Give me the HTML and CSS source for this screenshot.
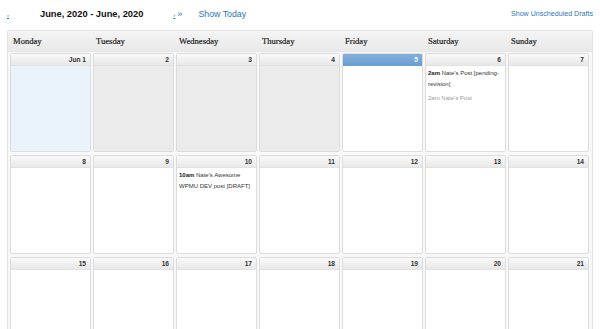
FILE: index.html
```html
<!DOCTYPE html>
<html>
<head>
<meta charset="utf-8">
<link rel="stylesheet" href="styles.css">
</head>
<body>
<div class="toolbar">
  <a class="nav prev" href="#">‹</a>
  <span class="title">June, 2020 - June, 2020</span>
  <a class="nav next" href="#">›</a>
  <a class="nav dbl" href="#">»</a>
  <a class="today-link" href="#">Show Today</a>
  <a class="drafts" href="#">Show Unscheduled Drafts</a>
</div>
<div class="calendar">
  <div class="dayhead">
    <div>Monday</div><div>Tuesday</div><div>Wednesday</div><div>Thursday</div><div>Friday</div><div>Saturday</div><div>Sunday</div>
  </div>
  <div class="grid">
    <div class="cell current"><div class="ch">Jun 1</div><div class="cb"></div></div>
    <div class="cell past"><div class="ch">2</div><div class="cb"></div></div>
    <div class="cell past"><div class="ch">3</div><div class="cb"></div></div>
    <div class="cell past"><div class="ch">4</div><div class="cb"></div></div>
    <div class="cell is-today"><div class="ch">5</div><div class="cb"></div></div>
    <div class="cell"><div class="ch">6</div><div class="cb">
      <div class="ev"><b>2am</b> Nate's Post [pending-revision]</div>
      <div class="ev muted">2am Nate's Post</div>
    </div></div>
    <div class="cell"><div class="ch">7</div><div class="cb"></div></div>

    <div class="cell"><div class="ch">8</div><div class="cb"></div></div>
    <div class="cell"><div class="ch">9</div><div class="cb"></div></div>
    <div class="cell"><div class="ch">10</div><div class="cb">
      <div class="ev"><b>10am</b> Nate's Awesome WPMU DEV post [DRAFT]</div>
    </div></div>
    <div class="cell"><div class="ch">11</div><div class="cb"></div></div>
    <div class="cell"><div class="ch">12</div><div class="cb"></div></div>
    <div class="cell"><div class="ch">13</div><div class="cb"></div></div>
    <div class="cell"><div class="ch">14</div><div class="cb"></div></div>

    <div class="cell"><div class="ch">15</div><div class="cb"></div></div>
    <div class="cell"><div class="ch">16</div><div class="cb"></div></div>
    <div class="cell"><div class="ch">17</div><div class="cb"></div></div>
    <div class="cell"><div class="ch">18</div><div class="cb"></div></div>
    <div class="cell"><div class="ch">19</div><div class="cb"></div></div>
    <div class="cell"><div class="ch">20</div><div class="cb"></div></div>
    <div class="cell"><div class="ch">21</div><div class="cb"></div></div>
  </div>
</div>
</body>
</html>
```
FILE: styles.css
```css
html, body {
  margin: 0;
  padding: 0;
  background: #fff;
  font-family: "Liberation Sans", Arial, sans-serif;
  overflow: hidden;
}
body { height: 329px; }
.toolbar {
  display: flex;
  align-items: center;
  height: 28px;
  padding: 0 7px;
  width: 586px;
}
.toolbar a { color: #2b78b6; }
.nav { font-size: 6px; text-decoration: underline; }
.prev { margin-top: 2px; }
.title {
  font-weight: bold;
  font-size: 9.3px;
  color: #111;
  margin-left: 31px;
}
.next { margin-left: 30px; margin-top: 2px; }
.dbl { margin-left: 2px; font-size: 9px; text-decoration: none; }
.today-link {
  font-size: 8.8px;
  text-decoration: none;
  margin-left: 16px;
}
.drafts {
  margin-left: auto;
  font-size: 7.1px;
  text-decoration: none;
}
.calendar {
  margin-left: 7px;
  margin-top: 2px;
  width: 584px;
  border: 1px solid #e4e4e4;
  border-radius: 2px;
  background: #f8f8f8;
  box-shadow: 0 0 2px rgba(0,0,0,0.05);
}
.dayhead {
  display: grid;
  grid-template-columns: repeat(7, 81px);
  column-gap: 2px;
  padding: 0 3px 0 2px;
  height: 20px;
  align-items: center;
  background: linear-gradient(#f4f4f4, #e9e9e9);
  border-bottom: 1px solid #e6e6e6;
  font-family: "Liberation Serif", Georgia, serif;
  font-size: 8.6px;
  color: #222;
  -webkit-text-stroke: 0.2px #222;
}
.dayhead div { padding-left: 3px; }
.grid {
  display: grid;
  grid-template-columns: repeat(7, 81px);
  grid-auto-rows: 99px;
  gap: 3px 2px;
  padding: 1px 3px 0 2px;
}
.cell {
  border: 1px solid #dcdcdc;
  border-radius: 2px;
  background: #fff;
  display: flex;
  flex-direction: column;
  overflow: hidden;
}
.ch {
  height: 11px;
  line-height: 11px;
  text-align: right;
  padding-right: 4px;
  font-size: 6.6px;
  font-weight: bold;
  color: #333;
  background: linear-gradient(#f9f9f9, #e8e8e8);
  border-bottom: 1px solid #e2e2e2;
}
.cb { flex: 1; padding: 2px 2px 0 2px; }
.current .cb { background: #eaf2fc; }
.past .cb { background: #ebebeb; }
.is-today .ch {
  background: linear-gradient(#82afdb, #6d9fd1);
  color: #fff;
  border-bottom-color: #6d9fd1;
}
.ev {
  font-size: 6px;
  line-height: 11px;
  color: #333;
  margin-bottom: 3px;
}
.ev b { font-weight: bold; color: #222; }
.ev.muted { color: #9a9a9a; }
```
